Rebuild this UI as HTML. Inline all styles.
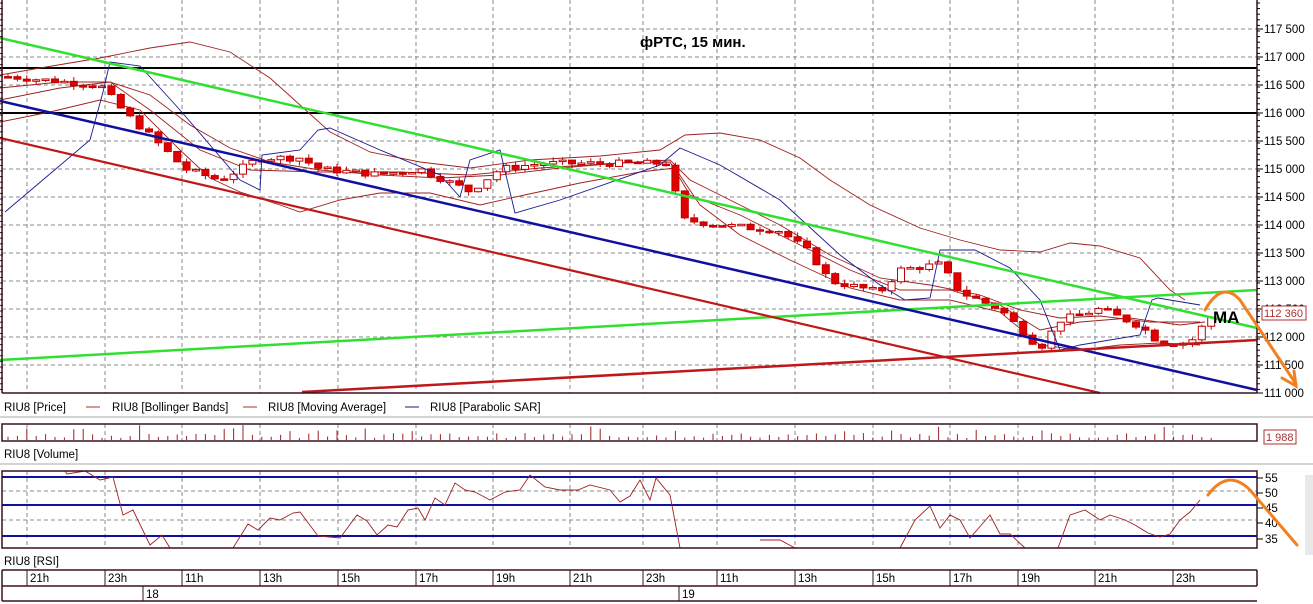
<!DOCTYPE html>
<html><head><meta charset="utf-8"><style>
html,body{margin:0;padding:0;background:#fff;width:1313px;height:604px;overflow:hidden}
svg{display:block}
text{font-family:"Liberation Sans",sans-serif}
</style></head><body>
<svg id="s" width="1313" height="604" xmlns="http://www.w3.org/2000/svg">
<rect width="1313" height="604" fill="#fff"/>
<g id="grid" stroke="#888" stroke-dasharray="4,3" stroke-width="1"></g>
<g id="chart"></g>
<g fill="none" stroke="#3a1020" stroke-width="1.5">
<line x1="2" y1="0" x2="2" y2="393"/><line x1="2" y1="393" x2="1257" y2="393"/><line x1="1257" y1="0" x2="1257" y2="393"/>
<rect x="2" y="424" width="1255" height="17"/>
<rect x="2" y="471" width="1255" height="77"/>
<line x1="2" y1="570" x2="1257" y2="570"/><line x1="2" y1="586" x2="1257" y2="586"/><line x1="2" y1="601" x2="1257" y2="601"/>
<line x1="2" y1="570" x2="2" y2="601"/><line x1="1257" y1="570" x2="1257" y2="586"/>
</g>
<g stroke="#aaa"><line x1="0" y1="417" x2="1313" y2="417"/><line x1="0" y1="464" x2="1313" y2="464"/></g>
<g font-size="11.5" fill="#000">
<text x="4" y="411">RIU8 [Price]</text>
<line x1="86" y1="407" x2="100" y2="407" stroke="#b03030"/><text x="112" y="411">RIU8 [Bollinger Bands]</text>
<line x1="243" y1="407" x2="257" y2="407" stroke="#b03030"/><text x="268" y="411">RIU8 [Moving Average]</text>
<line x1="405" y1="407" x2="419" y2="407" stroke="#1a1a80"/><text x="430" y="411">RIU8 [Parabolic SAR]</text>
<text x="4" y="458">RIU8 [Volume]</text>
<text x="4" y="565">RIU8 [RSI]</text>
</g>
<g id="time" font-size="11.5"></g>
<g id="axis" font-size="11.5" fill="#000"></g>
<text x="640" y="47" font-size="15" font-weight="bold" fill="#000">фРТС, 15 мин.</text>
<text x="1213" y="323" font-size="17" font-weight="bold" fill="#000">MA</text>
<rect x="1262" y="306" width="44" height="14" fill="#fff" stroke="#b03030"/>
<text x="1264" y="317" font-size="11" fill="#b03030">112 360</text>
<rect x="1264" y="430" width="32" height="14" fill="#fff" stroke="#b03030"/>
<text x="1266" y="441" font-size="11" fill="#b03030">1 988</text>
<rect x="1305" y="475" width="8" height="80" fill="#e8e8e8"/>
<g fill="none" stroke="#f08020" stroke-width="3" stroke-linecap="round">
<path d="M1205,310 Q1222,280 1240,300 L1296,384"/><path d="M1282,378 L1296,386 L1294,371"/>
<path d="M1208,495 Q1228,468 1250,490 L1297,545"/>
</g>
</svg>
<script>
var S='http://www.w3.org/2000/svg';
function el(p,t,a){var e=document.createElementNS(S,t);for(var k in a)e.setAttribute(k,a[k]);p.appendChild(e);return e;}
var g=document.getElementById('grid'),c=document.getElementById('chart'),ax=document.getElementById('axis'),tm=document.getElementById('time');
var xs=[27,105,182,260,338,416,493,570,643,717,795,873,950,1018,1095,1173];
var lab=['21h','23h','11h','13h','15h','17h','19h','21h','23h','11h','13h','15h','17h','19h','21h','23h'];
function Y(p){return 113+(116000-p)*0.056;}
xs.forEach(function(x,i){
 el(g,'line',{x1:x,y1:0,x2:x,y2:393});el(g,'line',{x1:x,y1:424,x2:x,y2:441});el(g,'line',{x1:x,y1:471,x2:x,y2:548});
 el(tm,'line',{x1:x,y1:570,x2:x,y2:586,stroke:'#3a1020'});
 var t=el(tm,'text',{x:x+3,y:582});t.textContent=lab[i];
});
[[143,'18'],[679,'19']].forEach(function(d){el(tm,'line',{x1:d[0],y1:586,x2:d[0],y2:601,stroke:'#3a1020'});var t=el(tm,'text',{x:d[0]+3,y:598});t.textContent=d[1];});
for(var p=111000;p<=117500;p+=500){var y=Y(p);el(g,'line',{x1:2,y1:y,x2:1257,y2:y});
 el(ax,'line',{x1:1257,y1:y,x2:1263,y2:y,stroke:'#000'});var t=el(ax,'text',{x:1264,y:y+4});t.textContent=(p/1000|0)+' '+String(p%1000).padStart(3,'0');}
for(var y=3;y<393;y+=5.6){el(ax,'line',{x1:1257,y1:y,x2:1260,y2:y,stroke:'#000'});el(ax,'line',{x1:0,y1:y,x2:3,y2:y,stroke:'#3a1020'});}
[477,491,505,520,536].forEach(function(y){el(g,'line',{x1:2,y1:y,x2:1257,y2:y});});
[[55,482],[50,497],[45,512],[40,527],[35,543]].forEach(function(r){el(ax,'line',{x1:1257,y1:r[1]-4,x2:1263,y2:r[1]-4,stroke:'#000'});var t=el(ax,'text',{x:1265,y:r[1]});t.textContent=r[0];});
el(c,'line',{x1:0,y1:68,x2:1257,y2:68,stroke:'#000','stroke-width':2});
el(c,'line',{x1:0,y1:113,x2:1257,y2:113,stroke:'#000','stroke-width':2});
// bands (hand-drawn)
function path(pts,st,w){var d='';pts.forEach(function(p,i){d+=(i?'L':'M')+p[0]+','+p[1];});el(c,'path',{d:d,fill:'none',stroke:st,'stroke-width':w});}
var R='#a02020';
path([[0,75],[40,68],[100,58],[150,48],[190,42],[230,52],[270,78],[300,105],[330,132],[370,152],[420,162],[470,168],[530,160],[600,156],[660,150],[685,135],[720,133],[760,140],[800,158],[830,180],[870,205],[920,228],[960,240],[1000,250],[1040,252],[1070,243],[1100,246],[1140,258],[1170,290],[1185,300]],R,0.9);
path([[0,122],[50,112],[100,100],[140,110],[180,150],[210,178],[240,192],[280,205],[300,212],[340,200],[380,193],[430,193],[480,205],[520,196],[580,183],[640,172],[675,168],[700,205],[740,235],[790,260],[850,288],[900,300],[950,300],[1000,312],[1040,345],[1080,350],[1120,345],[1160,343],[1200,345]],R,0.9);
path([[0,100],[60,88],[110,82],[150,95],[190,125],[230,148],[270,162],[320,170],[380,175],[440,178],[500,175],[560,168],[620,163],[670,160],[690,180],[730,200],[780,225],[830,255],[880,278],[930,285],[980,295],[1020,310],[1060,318],[1100,316],[1150,322],[1200,322]],R,0.9);
path([[0,88],[60,82],[110,82],[150,110],[200,150],[250,170],[320,172],[400,172],[470,175],[540,168],[620,163],[670,162],[690,195],[740,215],[790,240],[850,270],[900,290],[950,290],[1000,305],[1040,330],[1080,322],[1130,318],[1180,325],[1205,322]],R,0.9);
// candles
var kp=[[8,116650],[100,116500],[125,116000],[150,115600],[185,115000],[220,114800],[260,115200],[300,115200],[320,115000],[380,114900],[420,115000],[470,114600],[500,115000],[540,115100],[670,115100],[680,114100],[720,114000],[780,113900],[810,113500],[830,113000],[880,112800],[900,113200],[940,113300],[960,112800],[1000,112500],[1040,111800],[1060,112300],[1100,112500],[1140,112200],[1160,111900],[1190,111900],[1210,112360]];
function P(x){for(var i=1;i<kp.length;i++)if(x<=kp[i][0]){var a=kp[i-1],b=kp[i];return a[1]+(b[1]-a[1])*(x-a[0])/(b[0]-a[0]);}return kp[kp.length-1][1];}
var seed=7;function rnd(){seed=(seed*9301+49297)%233280;return seed/233280;}
var prev=P(8),cx=[];
for(var x=8;x<=1212;x+=9.4){var cl=P(x)+(rnd()-0.5)*120,op=prev;var hi=Math.max(op,cl)+rnd()*80,lo=Math.min(op,cl)-rnd()*80;
 el(c,'line',{x1:x,y1:Y(hi),x2:x,y2:Y(lo),stroke:'#c00000'});
 var t=Math.min(Y(op),Y(cl)),h=Math.max(1.5,Math.abs(Y(op)-Y(cl)));
 el(c,'rect',{x:x-3.5,y:t,width:7,height:h,fill:cl<op?'#e00000':'#fff',stroke:'#c00000'});
 prev=cl;cx.push(x);}
var sar='M5,212 L90,140 L103,92 L110,62 L140,66 L180,110 L240,180 L260,190 L262,155 L300,150 L318,130 L330,128 L380,150 L440,175 L460,197 L470,160 L500,150 L515,213 L560,200 L660,165 L680,148 L720,165 L780,200 L840,255 L880,285 L905,300 L930,298 L940,250 L975,250 L1010,268 L1040,300 L1060,350 L1080,345 L1140,335 L1152,300 L1158,298 L1200,305';
el(c,'path',{d:sar,fill:'none',stroke:'#1a1a90','stroke-width':0.9});
el(c,'line',{x1:0,y1:38,x2:1257,y2:328,stroke:'#30e030','stroke-width':2.5});
el(c,'line',{x1:0,y1:360,x2:1257,y2:290,stroke:'#30e030','stroke-width':2.5});
el(c,'line',{x1:0,y1:101,x2:1257,y2:390,stroke:'#1010a0','stroke-width':2.5});
el(c,'line',{x1:0,y1:138,x2:1100,y2:393,stroke:'#c01818','stroke-width':2.2});
el(c,'line',{x1:302,y1:392,x2:1257,y2:340,stroke:'#c01818','stroke-width':2.5});
for(var i=0;i<cx.length;i++){var h=2+rnd()*5;if(rnd()<0.12)h=8+rnd()*7;el(c,'line',{x1:cx[i],y1:440,x2:cx[i],y2:440-h,stroke:'#a02020'});}
el(c,'line',{x1:2,y1:477,x2:1257,y2:477,stroke:'#1010a0','stroke-width':2});
el(c,'line',{x1:2,y1:505,x2:1257,y2:505,stroke:'#1010a0','stroke-width':2});
el(c,'line',{x1:2,y1:536,x2:1257,y2:536,stroke:'#1010a0','stroke-width':2});
var rsi='M65,471 L67,474 L85,471 L100,480 L113,477 L123,515 L133,510 L150,545 L162,535 L170,548 M233,548 L248,524 L258,530 L270,518 L280,520 L293,513 L300,512 L318,536 L340,538 L357,515 L367,521 L377,535 L388,525 L397,527 L408,510 L418,508 L425,520 L435,498 L445,505 L455,483 L465,490 L475,492 L490,500 L505,492 L520,490 L530,475 L545,487 L560,490 L578,490 L590,485 L610,490 L620,502 L630,496 L640,480 L650,500 L656,478 L670,495 L680,548 M760,540 L780,540 L795,548 M900,548 L915,520 L930,506 L940,528 L950,515 L960,520 L970,538 L990,515 L1000,534 L1010,534 L1025,548 M1058,548 L1070,515 L1085,510 L1100,520 L1110,515 L1125,520 L1135,525 L1148,533 L1160,537 L1170,534 L1180,520 L1190,512 L1200,500';
el(c,'path',{d:rsi,fill:'none',stroke:'#a02020','stroke-width':0.9});
</script>
</body></html>
